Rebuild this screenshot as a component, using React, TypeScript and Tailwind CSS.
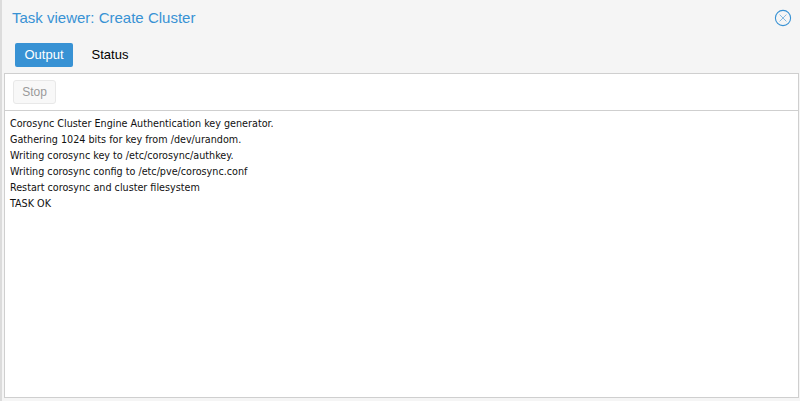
import { useState } from 'react';

const logLines = [
  'Corosync Cluster Engine Authentication key generator.',
  'Gathering 1024 bits for key from /dev/urandom.',
  'Writing corosync key to /etc/corosync/authkey.',
  'Writing corosync config to /etc/pve/corosync.conf',
  'Restart corosync and cluster filesystem',
  'TASK OK',
];

export default function App() {
  const [tab, setTab] = useState('output');

  return (
    <div className="h-[401px] w-[800px] overflow-hidden bg-[#f5f5f5] font-['Liberation_Sans',sans-serif]">
      <div className="flex h-[401px] flex-col border-l-2 border-[#dcdcdc] bg-[#f5f5f5] pr-[1px]">
        {/* Header */}
        <div className="flex h-[36px] shrink-0 items-center justify-between pl-[10px] pr-[7px]">
          <span className="text-[15px] text-[#3892d4]">Task viewer: Create Cluster</span>
          <svg className="h-[18px] w-[18px]" viewBox="0 0 18 18" fill="none" stroke="#3892d4">
            <circle cx="9" cy="9" r="7.6" strokeWidth="1.1" />
            <path d="M5.6 5.6l6.8 6.8M12.4 5.6l-6.8 6.8" strokeWidth="0.6" />
          </svg>
        </div>

        {/* Tabs */}
        <div className="flex h-[37px] shrink-0 items-start gap-[8px] pl-[13px] pt-[7px]">
          <button
            onClick={() => setTab('output')}
            className={`h-[24px] w-[58px] rounded-[2px] text-[13px] ${
              tab === 'output' ? 'bg-[#3892d4] text-white' : 'text-black'
            }`}
          >
            Output
          </button>
          <button
            onClick={() => setTab('status')}
            className={`h-[24px] w-[58px] rounded-[2px] text-[13px] ${
              tab === 'status' ? 'bg-[#3892d4] text-white' : 'text-black'
            }`}
          >
            Status
          </button>
        </div>

        {/* Panel */}
        <div className="ml-[2px] flex min-h-0 flex-1 flex-col border border-[#cfcfcf] bg-white">
          <div className="flex h-[37px] shrink-0 items-center border-b border-[#cfcfcf] pl-[8px]">
            <button
              disabled
              className="h-[24px] w-[43px] rounded-[3px] border border-[#e8e8e8] bg-[#f8f8f8] text-[12px] text-[#9a9a9a]"
            >
              Stop
            </button>
          </div>
          <div className="flex-1 pl-[5px] pt-[5px] font-['DejaVu_Sans_Condensed','DejaVu_Sans',sans-serif] text-[10.7px] leading-[16px] text-[#111111] [font-stretch:condensed]">
            {logLines.map((line) => (
              <div key={line}>{line}</div>
            ))}
          </div>
        </div>
        <div className="h-[3px] shrink-0" />
      </div>
    </div>
  );
}
